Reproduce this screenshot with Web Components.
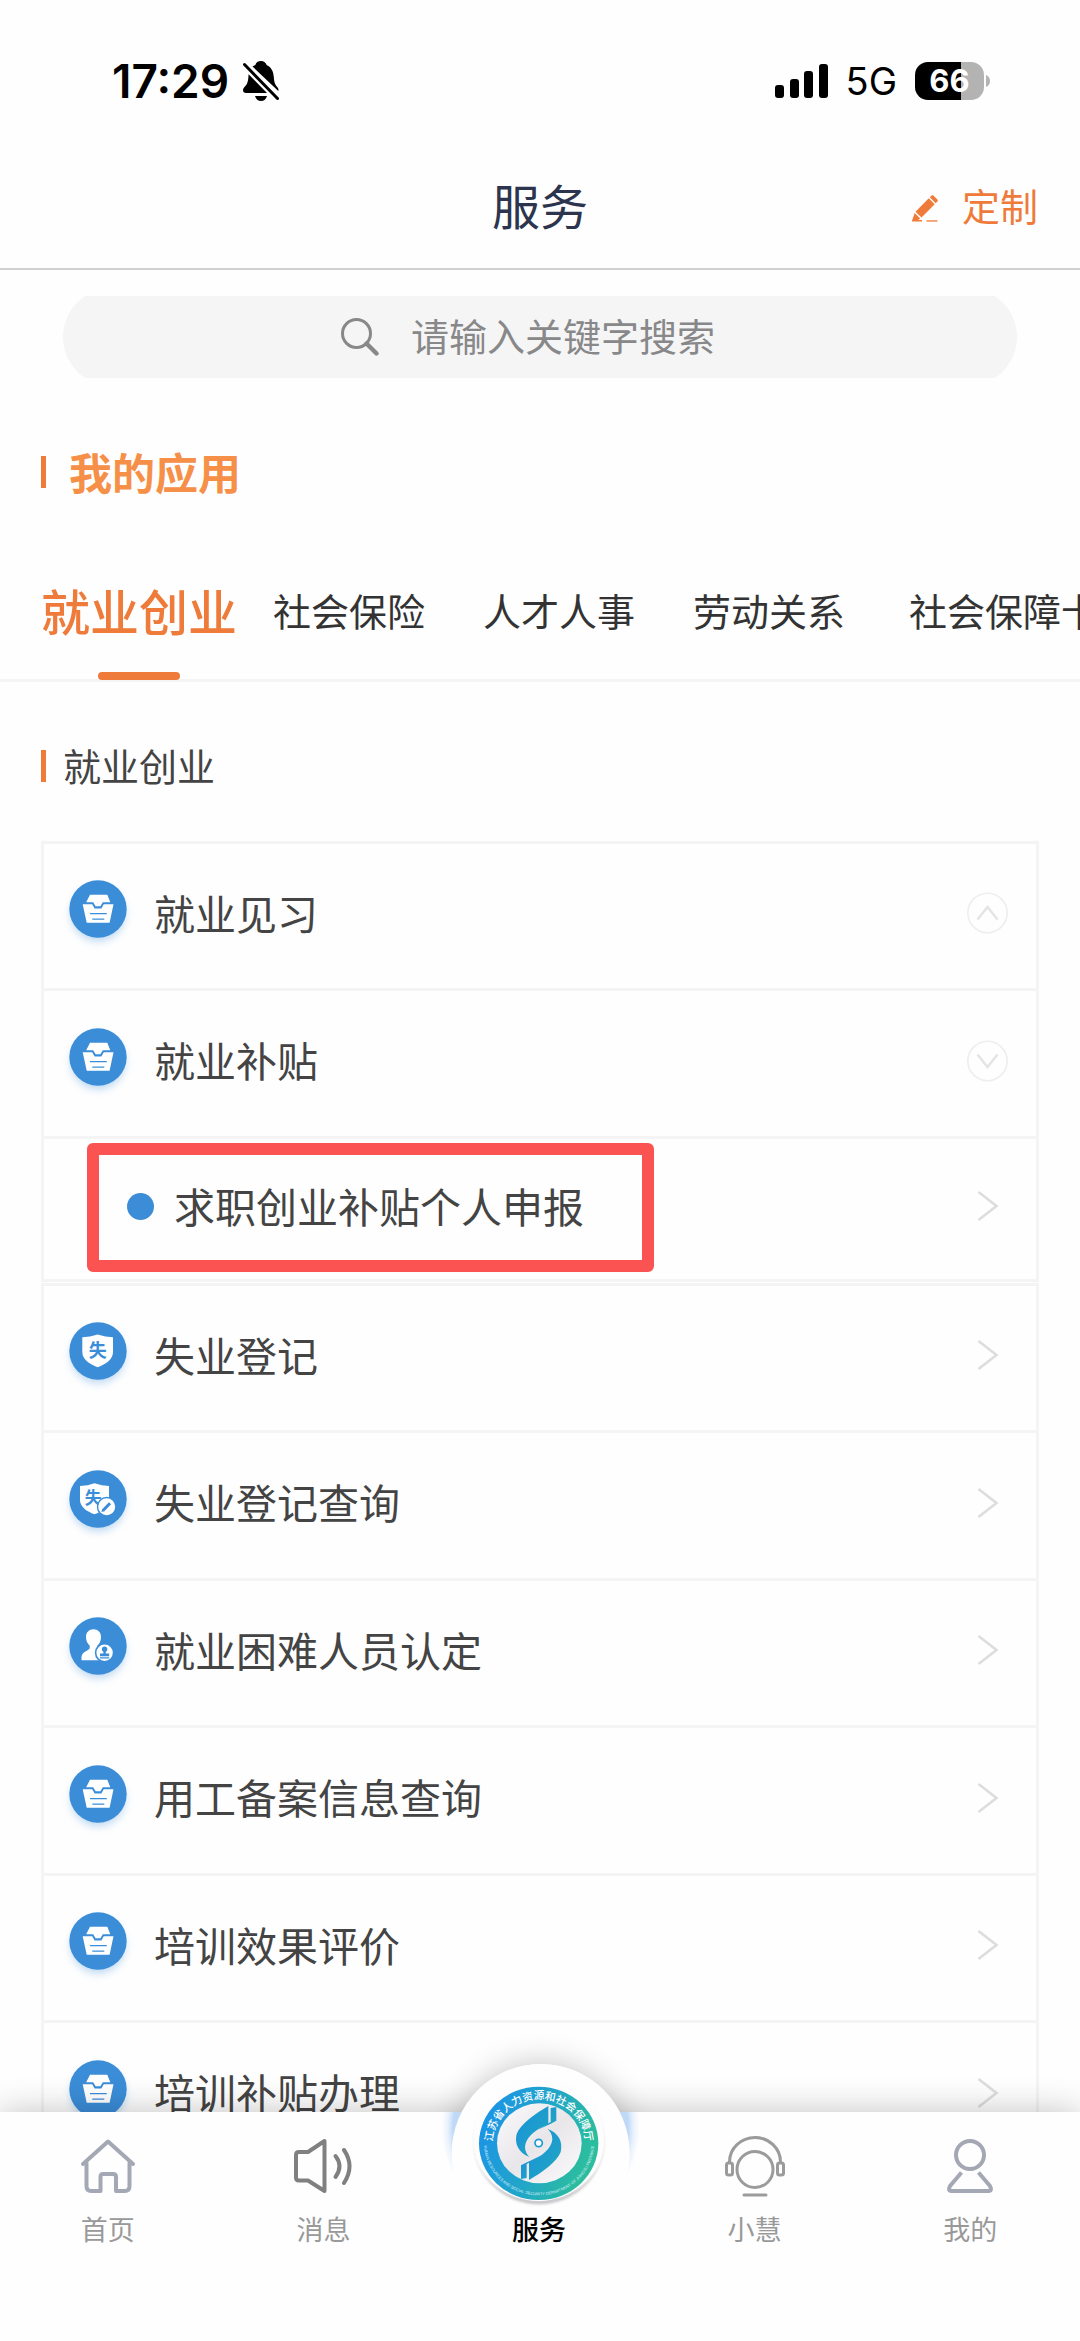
<!DOCTYPE html>
<html lang="zh-CN">
<head>
<meta charset="utf-8">
<meta name="viewport" content="width=device-width, initial-scale=1">
<title>服务</title>
<style>
  html, body { margin: 0; height: 100%; }
  body { font-family: "Noto Sans CJK SC", sans-serif; background: #fefefe; color: #444; }
</style>
</head>
<body>
<service-app></service-app>

<script>
const define = (name, html, setup) => {
  const template = document.createElement('template');
  template.innerHTML = html;
  customElements.define(name, class extends HTMLElement {
    constructor() {
      super();
      this.attachShadow({ mode: 'open' }).append(template.content.cloneNode(true));
    }
    connectedCallback() { if (setup) setup(this, this.shadowRoot); }
  });
};

/* ---------- phone status bar ---------- */
define('status-bar', `
<style>
  :host { display: flex; align-items: center; justify-content: space-between; height: 52px; padding: 55px 90px 39px 112px; color: #000; font-family: Inter, sans-serif; }
  div { display: flex; align-items: center; }
  svg { display: block; }
  .time { font-size: 46px; font-weight: 600; line-height: 52px; }
  .left { gap: 14px; }
  .right { gap: 18px; }
  .net { font-size: 38px; font-weight: 400; line-height: 52px; }
  .battery { gap: 2px; }
  .level { width: 69px; height: 38px; border-radius: 13px; justify-content: center; background: linear-gradient(90deg, #000 66%, #b3b3b3 66%); color: #fff; font-size: 31px; font-weight: 700; line-height: 38px; }
</style>
<div class="left">
  <span class="time">17:29</span>
  <svg width="36" height="40" viewBox="0 0 36 40">
    <path d="M18 0c3 0 5 1.700 5.600 4 5 2.200 6.900 7 7.200 12 .3 5 1.200 7.500 3.300 9.800 1.600 1.800 1.500 3.400 1.200 4.200L9.500 5.500c.9-.7 1.900-1.200 2.900-1.600C13 1.600 15 0 18 0z"/>
    <path d="M5.600 13.300L24 32H3c-3.500-.2-4-4-1.300-6.300C5 23 5.200 19 5.600 13.300z"/>
    <path d="M12 35h12c-.8 3-3 5-6 5s-5.200-2-6-5z"/>
    <path d="M1.500 3.500L34.500 37.500" stroke="#000" stroke-width="3" stroke-linecap="round"/>
  </svg>
</div>
<div class="right">
  <svg width="53" height="34" viewBox="0 0 53 34">
    <rect x="0" y="21" width="9" height="13" rx="3"/><rect x="15" y="15" width="9" height="19" rx="3"/>
    <rect x="29" y="7" width="9" height="27" rx="3"/><rect x="44" y="0" width="9" height="34" rx="3"/>
  </svg>
  <span class="net">5G</span>
  <div class="battery">
    <div class="level">66</div>
    <svg width="4" height="12" viewBox="0 0 4 12"><path d="M0 0c2.500 1 4 3.200 4 6s-1.500 5-4 6z" fill="#b3b3b3"/></svg>
  </div>
</div>`);

/* ---------- title bar ---------- */
define('page-header', `
<style>
  :host { display: grid; grid-template-columns: 1fr auto 1fr; align-items: center; height: 118px; padding: 0 42px 4px; border-bottom: 2px solid #d0d0d0; }
  h1 { grid-column: 2; margin: 0; padding-bottom: 3px; font-size: 48px; line-height: 56px; font-weight: 400; color: #2c354d; }
  button { justify-self: end; display: flex; align-items: center; gap: 24px; padding: 0; border: 0; background: none; font: inherit; font-size: 38px; line-height: 56px; color: #ef7b3a; }
  svg { margin-top: 6px; }
</style>
<h1><slot></slot></h1>
<button type="button">
  <svg width="26" height="27" viewBox="0 0 26 27" fill="#ef7b3a">
    <path d="M19.500.6c.6-.6 1.300-.6 1.900 0l4 3.900c.6.600.6 1.300 0 1.900l-1.700 1.800L17.800 2.300z"/>
    <path d="M16.800 3.300l5.900 5.900L9.500 22.600l-6-5.900z"/>
    <path d="M2.700 18.100l5.500 5.500-2.200 1.500H10V26.600H.6c-.5 0-.7-.4-.6-.9z"/>
    <path d="M14.500 25.300h11v1.300h-11z"/>
  </svg>
  <slot name="action"></slot>
</button>`);

/* ---------- search field ---------- */
define('search-box', `
<style>
  :host { display: block; padding: 26px 63px; }
  .clip { height: 82px; overflow: hidden; display: flex; align-items: center; }
  label { flex: 1; display: flex; align-items: center; justify-content: center; gap: 32px; height: 98px; flex-shrink: 0; border-radius: 49px; background: #f5f5f5; }
  input { box-sizing: border-box; width: 328px; height: 82px; padding: 0 0 5px; border: 0; outline: 0; background: none; font: inherit; font-size: 38px; color: #444; }
  input::placeholder { color: #88888a; opacity: 1; }
</style>
<div class="clip"><label>
  <svg width="38" height="38" viewBox="0 0 38 38" fill="none" stroke="#88888a">
    <circle cx="15.500" cy="15.500" r="14" stroke-width="3"/><path d="M25.500 25.500L35.500 35.500" stroke-width="4.400" stroke-linecap="round"/>
  </svg>
  <input type="search" aria-label="搜索">
</label></div>`, (host, root) => {
  root.querySelector('input').placeholder = host.getAttribute('placeholder');
});

/* ---------- heading with an orange bar ---------- */
define('section-title', `
<style>
  :host { display: flex; align-items: center; height: 32px; padding-left: 41px; }
  i { width: 5px; height: 32px; background: #ef7b3a; }
  h2 { margin: 0 0 0 17px; padding-bottom: 3px; font-size: 38px; line-height: 56px; font-weight: 400; color: #444; }
  :host([strong]) h2 { margin-left: 23px; font-size: 43px; font-weight: 700; color: #f69049; }
</style>
<i></i><h2><slot></slot></h2>`);

/* ---------- category tabs ---------- */
define('tab-strip', `
<style>
  :host { display: grid; grid-template-columns: repeat(4, 210px) 260px; height: 139px; padding-left: 34px; border-bottom: 3px solid #f4f4f4; overflow: visible; }
</style>
<slot></slot>`);
define('tab-item', `
<style>
  :host { position: relative; display: grid; }
  button { padding: 0; border: 0; background: none; font: inherit; font-size: 38px; line-height: 56px; color: #333; white-space: nowrap; }
  :host([active]) button { font-size: 49px; font-weight: 500; color: #ef7b3a; }
  :host([active])::after { content: ""; position: absolute; left: 50%; bottom: -1px; width: 82px; height: 8px; margin-left: -41px; border-radius: 4px; background: #ef7b3a; }
</style>
<button type="button" role="tab"><slot></slot></button>`, (host, root) => {
  root.querySelector('button').setAttribute('aria-selected', host.hasAttribute('active'));
});

/* ---------- round service icons ---------- */
const GLYPHS = {
  tray: `<path fill="#fff" d="M21 14.700H38.300L41.300 22.300H33.800L31.400 26.300H26.600L24.200 22.300H17.200z"/>
    <path fill="#fff" d="M13.700 24.300H23.200L25.600 28.400H32.400L34.800 24.300H44.500L40.600 42.700H17.700z"/>
    <path stroke="#3b8dd8" stroke-width="1.300" d="M21 33.600H37.800M23.300 39.200H35.300"/>`,
  shield: `<path fill="#fff" d="M13.300 15.300Q21 15 28.700 12.600 36.500 15 44 15.300V30C44 37.500 37 42 28.700 45.300 20.500 42 13.300 37.500 13.300 30z"/>
    <text x="28.700" y="35" text-anchor="middle" font-size="18" font-weight="700" fill="#3b8dd8">失</text>`,
  query: `<path fill="#fff" d="M11 16Q19 15.700 25.500 13.300 33 15.700 40 16V30C40 37 33 41.500 25.500 44.300 18 41.500 11 37 11 30z"/>
    <text x="24.300" y="34" text-anchor="middle" font-size="17" font-weight="700" fill="#3b8dd8">失</text>
    <circle cx="37.700" cy="36.700" r="9.200" fill="#fff" stroke="#3b8dd8" stroke-width="1.400"/>
    <path d="M34 40.500L41 33.300" stroke="#3b8dd8" stroke-width="3"/><path d="M32.400 42l.8-3 2.200 2.200z" fill="#3b8dd8"/>`,
  person: `<path fill="#fff" d="M24.500 12.300C29 12.300 32 15.500 32 20 32 24 30.500 26.500 28.500 28.500V31C31 33 36 33 38 36.500V43.200H12.500V40.500C12.500 35 18 34.500 20.700 31.500V28.500C18.500 26.500 17 24 17 20 17 15.500 20 12.300 24.500 12.300z"/>
    <circle cx="35.600" cy="35.700" r="9" fill="#fff" stroke="#3b8dd8" stroke-width="1.600"/>
    <circle cx="35.600" cy="32.300" r="2.700" fill="#3b8dd8"/><path fill="#3b8dd8" d="M34.400 34h2.400v2.500h3.400v2.800H31v-2.800h3.400zM31 40.300h9.200v1.200H31z"/>`
};
define('service-icon', `
<style>:host { display: block; } svg { display: block; overflow: visible; }</style>
<svg width="58" height="66" viewBox="0 0 58 66" aria-hidden="true">
  <defs><filter id="soft" x="-30%" y="-30%" width="160%" height="160%"><feGaussianBlur stdDeviation="4"/></filter></defs>
  <circle cx="29" cy="34" r="27" fill="#3b8dd8" opacity=".35" filter="url(#soft)"/>
  <circle cx="29" cy="29" r="28.700" fill="#3b8dd8"/>
  <g></g>
</svg>`, (host, root) => {
  root.querySelector('g').innerHTML = GLYPHS[host.getAttribute('name')];
});

/* ---------- service list ---------- */
define('service-list', `
<style>
  :host { display: grid; grid-auto-rows: 147px 148px; margin: 0 41px; border: solid #f4f4f4; border-width: 0 3px; }
  :host([group]) { grid-template-rows: 147px 148px 146px; margin-bottom: 1px; }
  :host([group]) ::slotted(:last-child) { border-bottom: 3px solid #f4f4f4; }
</style>
<slot></slot>`);

const ROW_STYLE = `
  :host { position: relative; display: grid; box-sizing: border-box; border-top: 3px solid #f4f4f4; }
  a, button { display: flex; align-items: center; box-sizing: border-box; width: 100%; padding: 0 28px 6px 25px; border: 0; background: none; font: inherit; font-size: 41px; line-height: 56px; text-align: left; text-decoration: none; color: #444; }
  .label { flex: 1; margin-left: 27px; padding-bottom: 3px; }
  svg { display: block; }`;
const ARROWS = {
  right: '<svg width="41" height="42" viewBox="0 0 41 42" fill="none" stroke="#ddd" stroke-width="2.600"><path d="M11.500 7L29.500 21 11.500 35"/></svg>',
  up: '<svg width="41" height="42" viewBox="0 0 41 42" fill="none" stroke="#e4e4e4"><circle cx="20.500" cy="21" r="19.700" stroke="#eee" stroke-width="1.600"/><path d="M10.500 27.500L20.500 15 30.500 27.500" stroke-width="2.400"/></svg>',
  down: '<svg width="41" height="42" viewBox="0 0 41 42" fill="none" stroke="#e4e4e4"><circle cx="20.500" cy="21" r="19.700" stroke="#eee" stroke-width="1.600"/><path d="M10.500 14.500L20.500 27 30.500 14.500" stroke-width="2.400"/></svg>'
};
define('service-row', `
<style>${ROW_STYLE}</style>
<a href="#"><span class="label"><slot></slot></span>${ARROWS.right}</a>`, (host, root) => {
  const icon = document.createElement('service-icon');
  icon.setAttribute('name', host.getAttribute('icon'));
  root.querySelector('a').prepend(icon);
});
define('service-fold', `
<style>${ROW_STYLE}</style>
<button type="button"><service-icon name="tray"></service-icon><span class="label"><slot></slot></span><span class="arrow"></span></button>`, (host, root) => {
  const open = host.hasAttribute('open');
  root.querySelector('button').setAttribute('aria-expanded', open);
  root.querySelector('.arrow').innerHTML = open ? ARROWS.down : ARROWS.up;
});
define('service-child', `
<style>${ROW_STYLE}
  a { padding-left: 83px; }
  .dot { width: 27px; height: 27px; border-radius: 50%; background: #3b8dd8; }
  .label { margin-left: 20px; }
  :host([marked])::after { content: ""; position: absolute; left: 43px; top: 4px; box-sizing: border-box; width: 567px; height: 129px; border: 12px solid #fb5252; border-radius: 6px; pointer-events: none; }
</style>
<a href="#"><span class="dot"></span><span class="label"><slot></slot></span>${ARROWS.right}</a>`);

/* ---------- bottom navigation ---------- */
const NAV_ICONS = {
  home: `<svg width="62" height="62" viewBox="0 0 62 62" fill="none" stroke="#a3a8b4" stroke-width="4" stroke-linejoin="round" stroke-linecap="round">
    <path d="M6 29L31 6.500 56 29"/><path d="M9.500 28V51Q9.500 56 14 56H23.500V42Q23.500 39 26 39H36Q39 39 39 42V56H48Q52.500 56 52.500 51V28"/></svg>`,
  sound: `<svg width="62" height="62" viewBox="0 0 62 62" fill="none" stroke="#808080" stroke-width="4" stroke-linejoin="round" stroke-linecap="round">
    <path d="M32.500 6V56L16 45.500H7Q4 45.500 4 42.500V20Q4 17 7 17H16z"/><path d="M43.500 21Q51.500 31 43.500 42"/><path d="M52 15Q63 31 52 48"/></svg>`,
  headset: `<svg width="62" height="62" viewBox="0 0 62 62" fill="none" stroke="#9b9b9b" stroke-width="3">
    <path d="M5.500 28V27A25.500 24.500 0 0 1 56.500 27V28"/><circle cx="31" cy="34.500" r="18"/>
    <rect x="2.500" y="28" width="6" height="12" rx="2"/><rect x="53.500" y="28" width="6" height="12" rx="2"/><path d="M20 60H42" stroke-linecap="round"/></svg>`,
  user: `<svg width="62" height="62" viewBox="0 0 62 62" fill="none" stroke="#a3a8b4" stroke-width="4">
    <circle cx="31" cy="20" r="14"/><path d="M22.500 37.500L11 51Q8.500 56 12.500 56H49.500Q53.500 56 51 51L39.500 37.500" stroke-linejoin="round"/></svg>`,
  emblem: `<svg class="emblem" width="200" height="160" viewBox="60 0 600 480">
    <defs>
      <radialGradient id="glow"><stop offset=".88" stop-color="#7fb4f0" stop-opacity=".5"/><stop offset=".94" stop-color="#9cc4f4" stop-opacity=".2"/><stop offset="1" stop-color="#9cc4f4" stop-opacity="0"/></radialGradient>
      <linearGradient id="ring" x1="0" y1="0" x2="1" y2=".35"><stop offset=".1" stop-color="#1b93e6"/><stop offset=".6" stop-color="#22a6c8"/><stop offset="1" stop-color="#2bbd9e"/></linearGradient>
      <linearGradient id="mark" x1="0" y1="0" x2="1" y2="1"><stop offset="0" stop-color="#1890dc"/><stop offset="1" stop-color="#22a9be"/></linearGradient>
      <linearGradient id="plate" x1="0" y1="0" x2="1" y2="1"><stop offset="0" stop-color="#fafafc"/><stop offset=".5" stop-color="#e9e6e9"/><stop offset="1" stop-color="#fbfbfc"/></linearGradient>
      <linearGradient id="rim" x1="0" y1="0" x2="0" y2="1"><stop offset="0" stop-color="#fff"/><stop offset=".7" stop-color="#f6f6f7"/><stop offset="1" stop-color="#c9c9cf"/></linearGradient>
      <filter id="drop" x="-20%" y="-20%" width="140%" height="140%"><feGaussianBlur stdDeviation="5"/></filter>
      <path id="top" d="M221 281A139 133 0 0 1 499 281"/>
      <path id="bottom" d="M195 280A165 156 0 0 0 525 280"/>
      <clipPath id="bar"><rect x="60" y="186" width="600" height="294"/></clipPath>
    </defs>
    <circle cx="365" cy="232" r="298" fill="url(#glow)" clip-path="url(#bar)"/>
    <circle cx="365" cy="309" r="267" fill="#fefefe"/>
    <ellipse cx="360" cy="276" rx="193" ry="186" fill="#777" opacity=".5" filter="url(#drop)"/>
    <ellipse cx="359" cy="269" rx="198" ry="190" fill="url(#rim)"/>
    <ellipse cx="359" cy="267" rx="195" ry="186" fill="#fdfdfe"/>
    <ellipse cx="359" cy="280" rx="179" ry="170" fill="url(#ring)"/>
    <ellipse cx="361" cy="280" rx="127" ry="120" fill="url(#plate)"/>
    <g fill="url(#mark)">
      <path d="M388 168V222C346 240 320 264 318 290 318 304 324 314 332 321 297 308 286 280 293 252 304 222 350 190 388 168z"/>
      <path d="M395 174L412 171V212C392 224 372 230 356 240 372 228 384 222 395 216z"/>
      <path d="M330 390V336C372 318 398 294 400 268 400 254 394 244 386 237 421 250 432 278 425 306 414 336 368 368 330 390z"/>
      <path d="M323 384L306 387V346C326 334 346 328 362 318 346 330 334 336 323 342z"/>
    </g>
    <circle cx="359" cy="279" r="11" fill="#fff" stroke="#1d9ad2" stroke-width="5"/>
    <text fill="#fff" font-size="32" font-weight="500" text-anchor="middle"><textPath href="#top" startOffset="50%">江苏省人力资源和社会保障厅</textPath></text>
    <text fill="#d8f0fa" font-size="12" font-family="Liberation Sans, sans-serif" text-anchor="middle"><textPath href="#bottom" startOffset="50%">HUMAN RESOURCES AND SOCIAL SECURITY DEPARTMENT OF JIANGSU PROVINCE</textPath></text>
  </svg>`
};
define('bottom-nav', `
<style>
  :host { position: relative; z-index: 1; display: block; }
  .halo { position: absolute; left: 50%; top: -48px; width: 178px; height: 178px; margin-left: -88px; border-radius: 50%; background: #fefefe; box-shadow: 0 0 32px rgba(0,0,0,.24); }
  nav { position: relative; display: grid; grid-template-columns: repeat(5, 1fr); padding: 23px 2px 92px 0; background: #fefefe; box-shadow: 0 0 32px rgba(0,0,0,.24); }
</style>
<div class="halo"></div>
<nav><slot></slot></nav>`);
define('nav-item', `
<style>
  :host { position: relative; display: block; }
  a { display: flex; flex-direction: column; align-items: center; gap: 12px; font-size: 27px; line-height: 40px; color: #999; text-decoration: none; }
  .icon { width: 62px; height: 62px; display: flex; justify-content: center; }
  svg { display: block; flex-shrink: 0; }
  .emblem { position: absolute; top: -85px; }
  :host([active]) a { color: #000; font-weight: 500; }
</style>
<a href="#"><span class="icon"></span><span><slot></slot></span></a>`, (host, root) => {
  root.querySelector('.icon').innerHTML = NAV_ICONS[host.getAttribute('icon')];
});

/* ---------- page ---------- */
define('service-app', `
<style>
  :host { display: flex; flex-direction: column; height: 100vh; overflow: hidden; }
  main { flex: 1; min-height: 0; overflow: hidden; }
  .mine { margin: 52px 0; }
  .category { margin: 68px 0 59px; }
</style>
<status-bar></status-bar>
<page-header>服务<span slot="action">定制</span></page-header>
<main>
  <search-box placeholder="请输入关键字搜索"></search-box>
  <section-title class="mine" strong>我的应用</section-title>
  <tab-strip role="tablist">
    <tab-item active>就业创业</tab-item>
    <tab-item>社会保险</tab-item>
    <tab-item>人才人事</tab-item>
    <tab-item>劳动关系</tab-item>
    <tab-item>社会保障卡</tab-item>
  </tab-strip>
  <section-title class="category">就业创业</section-title>
  <service-list group>
    <service-fold>就业见习</service-fold>
    <service-fold open>就业补贴</service-fold>
    <service-child marked>求职创业补贴个人申报</service-child>
  </service-list>
  <service-list>
    <service-row icon="shield">失业登记</service-row>
    <service-row icon="query">失业登记查询</service-row>
    <service-row icon="person">就业困难人员认定</service-row>
    <service-row icon="tray">用工备案信息查询</service-row>
    <service-row icon="tray">培训效果评价</service-row>
    <service-row icon="tray">培训补贴办理</service-row>
  </service-list>
</main>
<bottom-nav>
  <nav-item icon="home">首页</nav-item>
  <nav-item icon="sound">消息</nav-item>
  <nav-item icon="emblem" active>服务</nav-item>
  <nav-item icon="headset">小慧</nav-item>
  <nav-item icon="user">我的</nav-item>
</bottom-nav>`);
</script>
</body>
</html>
